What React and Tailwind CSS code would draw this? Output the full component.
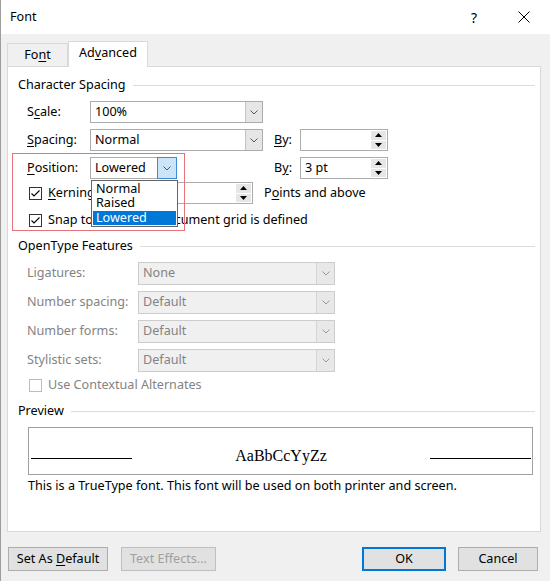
import React from "react";

const U = ({ children }) => (
  <span className="underline underline-offset-[2px] decoration-1">{children}</span>
);

function Chevron({ color = "#555555" }) {
  return (
    <svg width="8" height="5" viewBox="0 0 8 5">
      <path d="M0.5 0.5 L4 4 L7.5 0.5" fill="none" stroke={color} strokeWidth="1" />
    </svg>
  );
}

function Check({ checked, disabled }) {
  return (
    <div
      className={
        disabled
          ? "w-[13px] h-[13px] border border-[#bcbcbc] bg-white flex items-center justify-center shrink-0"
          : "w-[13px] h-[13px] border border-[#333333] bg-white flex items-center justify-center shrink-0"
      }
    >
      {checked && (
        <svg width="11" height="11" viewBox="0 0 11 11">
          <path d="M1.5 5.5 L4 8 L9.5 2.5" fill="none" stroke="#000" strokeWidth="1.1" />
        </svg>
      )}
    </div>
  );
}

function Combo({ w, value, disabled, active }) {
  if (disabled) {
    return (
      <div className={`${w} h-[23px] flex border border-[#cccccc] bg-[#f0f0f0]`}>
        <div className="flex-1 flex items-center pl-[4px] text-[#838383]">{value}</div>
        <div className="w-[18px] h-full border-l border-[#d4d4d4] bg-[#e8e8e8] flex items-center justify-center">
          <Chevron color="#9a9a9a" />
        </div>
      </div>
    );
  }
  if (active) {
    return (
      <div className={`${w} h-[22px] flex`}>
        <div className="flex-1 flex items-center pl-[4px] border border-r-0 border-[#acacac] bg-white">{value}</div>
        <div className="w-[20px] h-full border border-[#3c8ad8] bg-[#cce4f7] flex items-center justify-center">
          <Chevron color="#2c628b" />
        </div>
      </div>
    );
  }
  return (
    <div className={`${w} h-[22px] flex border border-[#acacac] bg-white`}>
      <div className="flex-1 flex items-center pl-[4px]">{value}</div>
      <div className="w-[17px] h-full border-l border-[#c4c4c4] bg-[#e6e6e6] flex items-center justify-center">
        <Chevron />
      </div>
    </div>
  );
}

function SpinArrow({ up }) {
  return (
    <svg width="7" height="4" viewBox="0 0 7 4">
      {up ? <path d="M0 4 L3.5 0 L7 4 Z" fill="#000" /> : <path d="M0 0 L3.5 4 L7 0 Z" fill="#000" />}
    </svg>
  );
}

function Spin({ w, value }) {
  return (
    <div className={`${w} h-[22px] flex border border-[#acacac] bg-white`}>
      <div className="flex-1 flex items-center pl-[4px]">{value}</div>
      <div className="w-[17px] h-full flex flex-col p-px gap-px bg-white">
        <div className="flex-1 bg-[#e6e6e6] flex items-center justify-center">
          <SpinArrow up />
        </div>
        <div className="flex-1 bg-[#e6e6e6] flex items-center justify-center">
          <SpinArrow />
        </div>
      </div>
    </div>
  );
}

function Section({ title }) {
  return (
    <div className="flex items-center h-[16px] pl-[10px] pr-[5px]">
      <span>{title}</span>
      <div className="flex-1 h-px bg-[#dcdcdc] ml-[7px]" />
    </div>
  );
}

function Btn({ w, children, primary, disabled }) {
  let cls = "h-[24px] flex items-center justify-center bg-[#e1e1e1] ";
  if (primary) cls += "border-2 border-[#0078d7]";
  else if (disabled) cls += "border border-[#bfbfbf] text-[#a0a0a0] bg-[#cccccc]";
  else cls += "border border-[#adadad]";
  return (
    <div className={`${w} ${cls}`}>
      <span>{children}</span>
    </div>
  );
}

export default function App() {
  return (
    <div className="relative w-[550px] h-[581px] bg-[#f0f0f0] border-l border-[#9d9d9d] text-[12.6px] text-black font-['Noto_Sans',sans-serif] overflow-hidden select-none">
      {/* Title bar */}
      <div className="h-[34px] bg-white flex items-center">
        <div className="pl-[9px] flex-1">Font</div>
        <span className="text-[14px]">?</span>
        <svg className="ml-[41px] mr-[20px]" width="12" height="12" viewBox="0 0 12 12">
          <path d="M0.5 0.5 L11.5 11.5 M11.5 0.5 L0.5 11.5" stroke="#000" strokeWidth="1" />
        </svg>
      </div>

      {/* Tabs */}
      <div className="mt-[7px] h-[25px] flex items-end pl-[6px]">
        <div className="w-[61px] h-[23px] border border-b-0 border-[#d9d9d9] bg-[#f0f0f0] flex items-center justify-center">
          <span>
            Fo<U>n</U>t
          </span>
        </div>
        <div className="relative z-10 w-[80px] h-[26px] mb-[-1px] border border-b-0 border-[#d9d9d9] bg-white flex items-center justify-center pb-[2px]">
          <span>
            Ad<U>v</U>anced
          </span>
        </div>
      </div>

      {/* Panel */}
      <div className="ml-[6px] w-[534px] h-[466px] border border-[#d9d9d9] bg-white flex flex-col">
        <div className="mt-[10px]">
          <Section title="Character Spacing" />
        </div>

        <div className="mt-[8px] h-[22px] flex items-center pl-[19px]">
          <div className="w-[63px]">
            S<U>c</U>ale:
          </div>
          <Combo w="w-[173px]" value="100%" />
        </div>

        <div className="mt-[6px] h-[22px] flex items-center pl-[19px]">
          <div className="w-[63px]">
            <U>S</U>pacing:
          </div>
          <div className="w-[184px]">
            <Combo w="w-[173px]" value="Normal" />
          </div>
          <div className="w-[26px]">
            <U>B</U>y:
          </div>
          <Spin w="w-[88px]" value="" />
        </div>

        <div className="mt-[6px] h-[22px] flex items-center pl-[19px]">
          <div className="w-[63px]">
            <U>P</U>osition:
          </div>
          <div className="w-[184px]">
            <Combo w="w-[87px]" value="Lowered" active />
          </div>
          <div className="w-[26px]">
            B<U>y</U>:
          </div>
          <Spin w="w-[88px]" value="3 pt" />
        </div>

        <div className="mt-[3px] h-[22px] flex items-center pl-[21px]">
          <div className="w-[224px] flex items-center">
            <Check checked />
            <div className="ml-[6px] whitespace-nowrap">
              <U>K</U>erning for fonts:
            </div>
            <div className="flex-1 ml-[4px] flex">
              <Spin w="w-full" value="" />
            </div>
          </div>
          <div className="ml-[11px]">
            P<U>o</U>ints and above
          </div>
        </div>

        <div className="mt-[8px] h-[16px] flex items-center pl-[21px]">
          <Check checked />
          <div className="ml-[6px] whitespace-nowrap">
            Snap to <U>g</U>rid when document grid is defined
          </div>
        </div>

        <div className="mt-[10px]">
          <Section title="OpenType Features" />
        </div>

        {[
          ["Ligatures:", "None", "mt-[8px]"],
          ["Number spacing:", "Default", "mt-[6px]"],
          ["Number forms:", "Default", "mt-[6px]"],
          ["Stylistic sets:", "Default", "mt-[6px]"],
        ].map(([label, val, mt]) => (
          <div key={label} className={`${mt} h-[23px] flex items-center pl-[19px]`}>
            <div className="w-[111px] text-[#838383] whitespace-nowrap">{label}</div>
            <Combo w="w-[197px]" value={val} disabled />
          </div>
        ))}

        <div className="mt-[5px] h-[16px] flex items-center pl-[21px]">
          <Check disabled />
          <div className="ml-[6px] text-[#838383]">Use Contextual Alternates</div>
        </div>

        <div className="mt-[10px]">
          <Section title="Preview" />
        </div>

        <div className="mt-[8px] ml-[20px] w-[505px] h-[48px] border border-[#a0a0a0] bg-white pt-[20px] pl-[2px] pr-[1px]">
          <div className="h-[20px] flex items-center">
            <div className="w-[101px] h-px bg-black" />
            <div className="flex-1 text-center font-['Liberation_Serif',serif] text-[16px] leading-[20px] mb-[5px]">
              AaBbCcYyZz
            </div>
            <div className="w-[101px] h-px bg-black" />
          </div>
        </div>

        <div className="mt-[3px] h-[16px] flex items-center pl-[20px] whitespace-nowrap">
          This is a TrueType font. This font will be used on both printer and screen.
        </div>
      </div>

      {/* Buttons */}
      <div className="mt-[15px] flex pl-[7px]">
        <Btn w="w-[100px]">
          Set As <U>D</U>efault
        </Btn>
        <div className="ml-[13px]">
          <Btn w="w-[95px]" disabled>
            Text Effects...
          </Btn>
        </div>
        <div className="ml-[146px]">
          <Btn w="w-[84px]" primary>
            OK
          </Btn>
        </div>
        <div className="ml-[12px]">
          <Btn w="w-[80px]">Cancel</Btn>
        </div>
      </div>

      {/* Dropdown list (open) */}
      <div className="absolute left-[90px] top-[180px] w-[87px] h-[47px] border border-[#646464] bg-white z-20 flex flex-col p-px">
        <div className="h-[15px] flex items-center pl-[3px] leading-none">Normal</div>
        <div className="h-[15px] flex items-center pl-[3px] leading-none">Raised</div>
        <div className="h-[15px] flex items-center pl-[3px] leading-none bg-[#0078d7] text-white">Lowered</div>
      </div>

      {/* Red annotation box */}
      <div className="absolute left-[11px] top-[153px] w-[173px] h-[78px] border border-[#e5737a] z-30 pointer-events-none" />
    </div>
  );
}
